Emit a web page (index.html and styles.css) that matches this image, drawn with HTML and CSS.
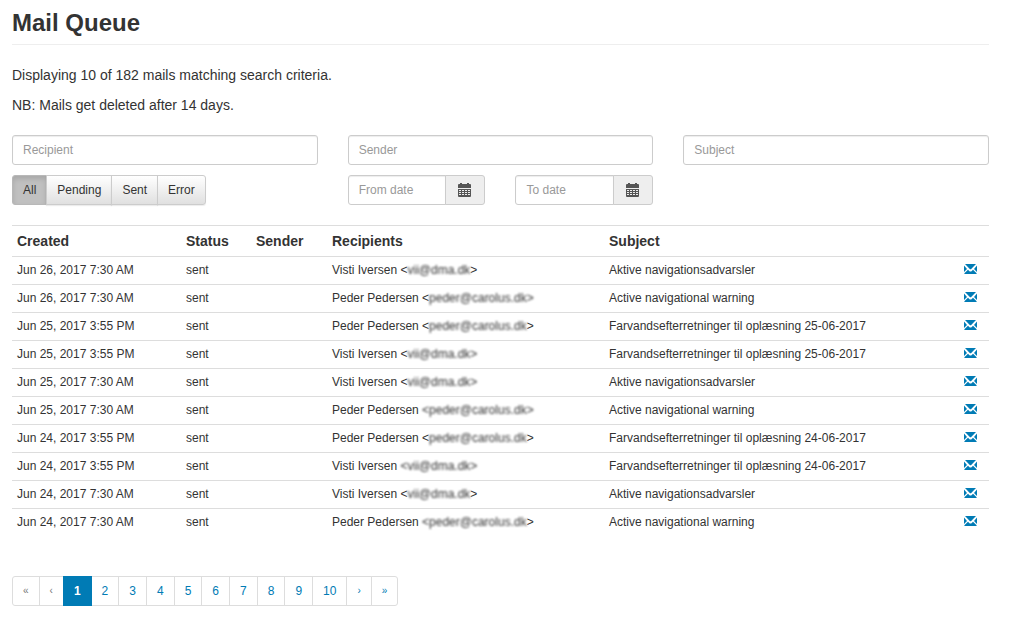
FILE: index.html
```html
<!DOCTYPE html>
<html lang="en">
<head>
<meta charset="utf-8">
<meta name="viewport" content="width=device-width, initial-scale=1">
<title>Mail Queue</title>
<link rel="stylesheet" href="styles.css">
</head>
<body>
<svg class="sprite" aria-hidden="true">
  <symbol id="envelope" viewBox="0 0 13 10">
    <path d="M1 0H12L7.2 4.9Q6.5 5.5 5.8 4.9ZM0 1.5L3 4.9L0 8ZM13 1.5L10 4.9L13 8ZM4 5.8L5.2 6.9Q6.5 7.9 7.8 6.9L9 5.8L12.6 9.3V10H0.4V9.3Z"/>
  </symbol>
  <symbol id="calendar" viewBox="0 0 13 14">
    <path fill-rule="evenodd" d="M2 0H4V1H9V0H11V1H12Q13 1 13 2V5H0V2Q0 1 1 1H2ZM0 6H13V13Q13 14 12 14H1Q0 14 0 13ZM1 7V8H3V7ZM4 7V8H6V7ZM7 7V8H9V7ZM10 7V8H12V7ZM1 9V10H3V9ZM4 9V10H6V9ZM7 9V10H9V9ZM10 9V10H12V9ZM1 11V12H3V11ZM4 11V12H6V11ZM7 11V12H9V11ZM10 11V12H12V11Z"/>
  </symbol>
</svg>
<main class="page">
  <h1 class="page-title">Mail Queue</h1>
  <p class="note">Displaying 10 of 182 mails matching search criteria.</p>
  <p class="note">NB: Mails get deleted after 14 days.</p>

  <form class="filters">
    <input class="field" type="text" placeholder="Recipient" aria-label="Recipient">
    <input class="field" type="text" placeholder="Sender" aria-label="Sender">
    <input class="field" type="text" placeholder="Subject" aria-label="Subject">
    <div class="btn-group">
      <button class="btn active" type="button" aria-pressed="true">All</button>
      <button class="btn" type="button">Pending</button>
      <button class="btn" type="button">Sent</button>
      <button class="btn" type="button">Error</button>
    </div>
    <div class="dates">
      <div class="date-group">
        <input class="field" type="text" placeholder="From date" aria-label="From date">
        <button class="addon" type="button" aria-label="Pick from date"><svg class="calendar-icon"><use href="#calendar"/></svg></button>
      </div>
      <div class="date-group">
        <input class="field" type="text" placeholder="To date" aria-label="To date">
        <button class="addon" type="button" aria-label="Pick to date"><svg class="calendar-icon"><use href="#calendar"/></svg></button>
      </div>
    </div>
  </form>

  <table class="mails">
    <colgroup><col class="col-created"><col class="col-status"><col class="col-sender"><col class="col-recipients"><col><col class="col-action"></colgroup>
    <thead>
      <tr><th>Created</th><th>Status</th><th>Sender</th><th>Recipients</th><th>Subject</th><th></th></tr>
    </thead>
    <tbody>
      <tr><td>Jun 26, 2017 7:30 AM</td><td>sent</td><td></td><td>Visti Iversen &lt;<span class="masked">vii@dma.dk</span>&gt;</td><td>Aktive navigationsadvarsler</td><td><a class="view" href="#" aria-label="View mail"><svg class="mail-icon"><use href="#envelope"/></svg></a></td></tr>
      <tr><td>Jun 26, 2017 7:30 AM</td><td>sent</td><td></td><td>Peder Pedersen &lt;<span class="masked">peder@carolus.dk&gt;</span></td><td>Active navigational warning</td><td><a class="view" href="#" aria-label="View mail"><svg class="mail-icon"><use href="#envelope"/></svg></a></td></tr>
      <tr><td>Jun 25, 2017 3:55 PM</td><td>sent</td><td></td><td>Peder Pedersen &lt;<span class="masked">peder@carolus.dk</span>&gt;</td><td>Farvandsefterretninger til oplæsning 25-06-2017</td><td><a class="view" href="#" aria-label="View mail"><svg class="mail-icon"><use href="#envelope"/></svg></a></td></tr>
      <tr><td>Jun 25, 2017 3:55 PM</td><td>sent</td><td></td><td>Visti Iversen &lt;<span class="masked">vii@dma.dk&gt;</span></td><td>Farvandsefterretninger til oplæsning 25-06-2017</td><td><a class="view" href="#" aria-label="View mail"><svg class="mail-icon"><use href="#envelope"/></svg></a></td></tr>
      <tr><td>Jun 25, 2017 7:30 AM</td><td>sent</td><td></td><td>Visti Iversen &lt;<span class="masked">vii@dma.dk&gt;</span></td><td>Aktive navigationsadvarsler</td><td><a class="view" href="#" aria-label="View mail"><svg class="mail-icon"><use href="#envelope"/></svg></a></td></tr>
      <tr><td>Jun 25, 2017 7:30 AM</td><td>sent</td><td></td><td>Peder Pedersen <span class="masked">&lt;peder@carolus.dk&gt;</span></td><td>Active navigational warning</td><td><a class="view" href="#" aria-label="View mail"><svg class="mail-icon"><use href="#envelope"/></svg></a></td></tr>
      <tr><td>Jun 24, 2017 3:55 PM</td><td>sent</td><td></td><td>Peder Pedersen &lt;<span class="masked">peder@carolus.dk</span>&gt;</td><td>Farvandsefterretninger til oplæsning 24-06-2017</td><td><a class="view" href="#" aria-label="View mail"><svg class="mail-icon"><use href="#envelope"/></svg></a></td></tr>
      <tr><td>Jun 24, 2017 3:55 PM</td><td>sent</td><td></td><td>Visti Iversen <span class="masked">&lt;vii@dma.dk&gt;</span></td><td>Farvandsefterretninger til oplæsning 24-06-2017</td><td><a class="view" href="#" aria-label="View mail"><svg class="mail-icon"><use href="#envelope"/></svg></a></td></tr>
      <tr><td>Jun 24, 2017 7:30 AM</td><td>sent</td><td></td><td>Visti Iversen &lt;<span class="masked">vii@dma.dk</span>&gt;</td><td>Aktive navigationsadvarsler</td><td><a class="view" href="#" aria-label="View mail"><svg class="mail-icon"><use href="#envelope"/></svg></a></td></tr>
      <tr><td>Jun 24, 2017 7:30 AM</td><td>sent</td><td></td><td>Peder Pedersen <span class="masked">&lt;peder@carolus.dk</span>&gt;</td><td>Active navigational warning</td><td><a class="view" href="#" aria-label="View mail"><svg class="mail-icon"><use href="#envelope"/></svg></a></td></tr>
    </tbody>
  </table>

  <nav aria-label="Pages">
    <ul class="pagination">
      <li><a class="page-link arrow disabled" href="#" aria-label="First">«</a></li>
      <li><a class="page-link arrow disabled" href="#" aria-label="Previous">‹</a></li>
      <li><a class="page-link current" href="#" aria-current="page">1</a></li>
      <li><a class="page-link" href="#">2</a></li>
      <li><a class="page-link" href="#">3</a></li>
      <li><a class="page-link" href="#">4</a></li>
      <li><a class="page-link" href="#">5</a></li>
      <li><a class="page-link" href="#">6</a></li>
      <li><a class="page-link" href="#">7</a></li>
      <li><a class="page-link" href="#">8</a></li>
      <li><a class="page-link" href="#">9</a></li>
      <li><a class="page-link" href="#">10</a></li>
      <li><a class="page-link arrow" href="#" aria-label="Next">›</a></li>
      <li><a class="page-link arrow" href="#" aria-label="Last">»</a></li>
    </ul>
  </nav>
</main>
</body>
</html>
```
FILE: styles.css
```css
*, *::before, *::after { box-sizing: border-box; }

body {
  margin: 0;
  background: #fff;
  color: #333;
  font: 14px/20px "Liberation Sans", Arial, sans-serif;
}

.sprite { display: none; }

.page { padding: 10px 20px 0 12px; }

.page-title {
  margin: 0 0 20px;
  padding-bottom: 8px;
  border-bottom: 1px solid #eee;
  font-size: 24px;
  line-height: 26px;
  font-weight: 700;
}

.note { margin: 0 0 10px; }

.filters {
  display: grid;
  grid-template-columns: repeat(3, minmax(0, 1fr));
  gap: 10px 30px;
  margin: 20px 0;
}

.field {
  width: 100%;
  min-width: 0;
  height: 30px;
  padding: 5px 10px;
  border: 1px solid #ccc;
  border-radius: 3px;
  background: #fff;
  color: #555;
  font: inherit;
  font-size: 12px;
  line-height: 18px;
  box-shadow: inset 0 1px 1px rgba(0, 0, 0, .075);
}
.field::placeholder { color: #999; opacity: 1; }

.btn-group { display: flex; }

.btn {
  height: 30px;
  margin: 0 0 0 -1px;
  padding: 5px 10px;
  border: 1px solid #ccc;
  background: linear-gradient(#fff, #e0e0e0);
  color: #333;
  font: inherit;
  font-size: 12px;
  line-height: 18px;
  box-shadow: inset 0 1px 0 rgba(255, 255, 255, .15), 0 1px 1px rgba(0, 0, 0, .075);
}
.btn:first-child { margin-left: 0; border-radius: 3px 0 0 3px; }
.btn:last-child { border-radius: 0 3px 3px 0; }
.btn.active {
  border-color: #b8b8b8;
  background: #c0c0c0;
  box-shadow: inset 0 3px 5px rgba(0, 0, 0, .125);
}

.dates {
  display: grid;
  grid-template-columns: repeat(2, minmax(0, 1fr));
  gap: 30px;
}
.date-group { display: flex; }
.date-group .field { flex: 1; border-radius: 3px 0 0 3px; }

.addon {
  display: flex;
  align-items: center;
  justify-content: center;
  flex: none;
  width: 40px;
  height: 30px;
  margin: 0 0 0 -1px;
  padding: 0;
  border: 1px solid #ccc;
  border-radius: 0 3px 3px 0;
  background: #eee;
  color: #555;
}
.calendar-icon { width: 13px; height: 14px; margin-right: 2px; fill: currentColor; }

.mails {
  width: 100%;
  margin-bottom: 40px;
  border-collapse: separate;
  border-spacing: 0;
  table-layout: fixed;
}
.col-created { width: 169px; }
.col-status { width: 70px; }
.col-sender { width: 76px; }
.col-recipients { width: 277px; }
.col-action { width: 30px; }

.mails th,
.mails td {
  padding: 5px;
  border-top: 1px solid #ddd;
  text-align: left;
  vertical-align: top;
  white-space: nowrap;
}
.mails td { font-size: 12px; line-height: 17px; }

.masked { filter: blur(1px); }

.view { display: flex; padding-top: 2px; color: #007bb5; }
.mail-icon { width: 13px; height: 10px; fill: currentColor; }

.pagination {
  display: flex;
  margin: 0;
  padding: 0;
  list-style: none;
}
.page-link {
  display: block;
  margin-left: -1px;
  padding: 5px 10px;
  border: 1px solid #ddd;
  background: #fff;
  color: #007bb5;
  font-size: 12px;
  line-height: 18px;
  text-decoration: none;
}
.pagination li:first-child .page-link { margin-left: 0; border-radius: 3px 0 0 3px; }
.pagination li:last-child .page-link { border-radius: 0 3px 3px 0; }
.page-link.arrow { font-size: 10px; }
.page-link.disabled { color: #777; }
.page-link.current {
  position: relative;
  border-color: #007bb5;
  background: #007bb5;
  color: #fff;
  font-weight: 700;
}
```
